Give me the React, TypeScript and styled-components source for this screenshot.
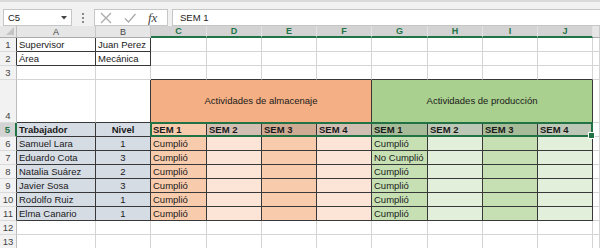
import React from "react"
import styled, { createGlobalStyle, css } from "styled-components"

const ORANGE_HEAD = "#f4b084"
const ORANGE_DARK = "#f8cbad"
const ORANGE_LIGHT = "#fce4d6"
const GREEN_HEAD = "#a9d08e"
const GREEN_DARK = "#c6e0b4"
const GREEN_LIGHT = "#e2efda"
const BLUE = "#d6dce4"
const EXCEL_GREEN = "#217346"
const GRID = "#d4d4d4"
const DARK = "#383838"

const GlobalStyle = createGlobalStyle`
    html, body {
        margin: 0;
        padding: 0;
        background: #fff;
        overflow: hidden;
    }
    body {
        font-family: "Liberation Sans", Arial, sans-serif;
        color: #1a1a1a;
    }
`

const Window = styled.div`
    width: 600px;
    height: 248px;
    overflow: hidden;
    display: flex;
    flex-direction: column;
`

const FormulaBar = styled.div`
    height: 33px;
    box-sizing: border-box;
    background: #f1f1f1;
    border-top: 2px solid #dadada;
    padding: 7px 0 0 3px;
    display: flex;
    align-items: flex-start;
`

const NameBox = styled.div`
    width: 69px;
    height: 17px;
    box-sizing: border-box;
    background: #fff;
    border: 1px solid #c6c6c6;
    display: flex;
    align-items: center;
    justify-content: space-between;
    padding: 0 4px 0 4px;
    font-size: 9.5px;
`

const Grip = styled.div`
    width: 22px;
    height: 17px;
    display: flex;
    align-items: center;
    justify-content: center;
`

const FxBox = styled.div`
    width: 74px;
    height: 17px;
    box-sizing: border-box;
    background: #fff;
    border: 1px solid #c6c6c6;
    display: flex;
    align-items: center;
    gap: 12px;
    padding-left: 5px;
`

const Fx = styled.span`
    font-family: "Liberation Serif", "Times New Roman", serif;
    font-style: italic;
    font-size: 13px;
    color: #444;
    line-height: 1;
`

const FormulaInput = styled.div`
    flex: 1;
    margin-left: 4px;
    height: 17px;
    box-sizing: border-box;
    background: #fff;
    border: 1px solid #c6c6c6;
    border-right: none;
    display: flex;
    align-items: center;
    padding-left: 7px;
    font-size: 9.5px;
`

const Sheet = styled.div`
    display: grid;
    grid-template-columns: 17px 79px 55px 56px 55px 55px 55px 56px 55px 55px 55px 1fr;
    grid-template-rows: 12px repeat(3, 14px) 43px repeat(9, 14px);
    font-size: 9.5px;
`

const Corner = styled.div`
    grid-row: 1;
    grid-column: 1;
    background: #e6e6e6;
    border-right: 1px solid #bdbdbd;
    border-bottom: 1px solid #ababab;
    display: flex;
    align-items: flex-end;
    justify-content: flex-end;
    padding: 0 2px 2px 0;
    box-sizing: border-box;
`

const ColHead = styled.div<{ $col: number; $active?: boolean }>`
    grid-row: 1;
    grid-column: ${p => p.$col};
    box-sizing: border-box;
    display: flex;
    align-items: center;
    justify-content: center;
    font-size: 9px;
    background: #e6e6e6;
    color: #444;
    border-right: 1px solid #c9c9c9;
    border-bottom: 1px solid #ababab;
    ${p => p.$active && css`
        background: #d3d3d3;
        color: ${EXCEL_GREEN};
        font-weight: bold;
        border-right-color: #e2e2e2;
        border-bottom: 2px solid ${EXCEL_GREEN};
    `}
`

const RowHead = styled.div<{ $row: number; $edge: string; $active?: boolean }>`
    grid-row: ${p => p.$row};
    grid-column: 1;
    box-sizing: border-box;
    display: flex;
    align-items: flex-end;
    justify-content: center;
    padding-bottom: 1px;
    background: #f2f2f2;
    color: #444;
    border-right: 1px solid ${p => p.$edge};
    border-bottom: 1px solid #dadada;
    ${p => p.$active && css`
        background: #d3d3d3;
        color: ${EXCEL_GREEN};
        font-weight: bold;
        border-right: 2px solid ${EXCEL_GREEN};
    `}
`

const Cell = styled.div<{
    $row: number
    $col: number
    $span: number
    $bg: string
    $right: string
    $bottom: string
    $align: "left" | "center"
    $bold?: boolean
    $middle?: boolean
    $sel?: boolean
}>`
    grid-row: ${p => p.$row};
    grid-column: ${p => p.$col} / span ${p => p.$span};
    box-sizing: border-box;
    display: flex;
    align-items: ${p => (p.$middle ? "center" : "flex-end")};
    justify-content: ${p => (p.$align === "center" ? "center" : "flex-start")};
    padding: 0 2px 1px 2px;
    white-space: nowrap;
    overflow: hidden;
    background-color: ${p => p.$bg};
    background-image: ${p => (p.$sel ? "linear-gradient(rgba(40,40,40,0.2), rgba(40,40,40,0.2))" : "none")};
    border-right: 1px solid ${p => p.$right};
    border-bottom: 1px solid ${p => p.$bottom};
    font-weight: ${p => (p.$bold ? "bold" : "normal")};
`

// C5:J5 selection frame, sits over the cells
const Selection = styled.div`
    grid-row: 6;
    grid-column: 4 / 12;
    margin: -1px 0 0 -1px;
    border: 2px solid ${EXCEL_GREEN};
    position: relative;
    pointer-events: none;
    z-index: 2;
`

const FillHandle = styled.div`
    position: absolute;
    right: -4px;
    bottom: -4px;
    width: 5px;
    height: 5px;
    background: ${EXCEL_GREEN};
    border: 1px solid #fff;
`

type CellSpec = {
    text?: string
    bg?: string
    bold?: boolean
    align?: "left" | "center"
    span?: number
    middle?: boolean
    sel?: boolean
}

const columns = ["A", "B", "C", "D", "E", "F", "G", "H", "I", "J", ""]
const fills = [BLUE, BLUE, ORANGE_DARK, ORANGE_LIGHT, ORANGE_DARK, ORANGE_LIGHT, GREEN_DARK, GREEN_LIGHT, GREEN_DARK, GREEN_LIGHT]

const workers: [string, string, string][] = [
    ["Samuel Lara", "1", "Cumplió"],
    ["Eduardo Cota", "3", "No Cumplió"],
    ["Natalia Suárez", "2", "Cumplió"],
    ["Javier Sosa", "3", "Cumplió"],
    ["Rodolfo Ruiz", "1", "Cumplió"],
    ["Elma Canario", "1", "Cumplió"],
]

const blankRow = (): CellSpec[] => columns.map(() => ({}))

const rows: CellSpec[][] = [
    [{ text: "Supervisor" }, { text: "Juan Perez" }, ...blankRow().slice(2)],
    [{ text: "Área" }, { text: "Mecánica" }, ...blankRow().slice(2)],
    blankRow(),
    [
        {}, {},
        { text: "Actividades de almacenaje", bg: ORANGE_HEAD, span: 4, align: "center", middle: true },
        { text: "Actividades de producción", bg: GREEN_HEAD, span: 4, align: "center", middle: true },
        {},
    ],
    [
        { text: "Trabajador", bg: BLUE, bold: true },
        { text: "Nivel", bg: BLUE, bold: true, align: "center" },
        ...["SEM 1", "SEM 2", "SEM 3", "SEM 4", "SEM 1", "SEM 2", "SEM 3", "SEM 4"].map((t, i) => ({
            text: t,
            bg: fills[i + 2],
            bold: true,
            sel: i > 0,
        })),
        {},
    ],
    ...workers.map(([name, level, prod]) => [
        { text: name, bg: BLUE },
        { text: level, bg: BLUE, align: "center" as const },
        { text: "Cumplió", bg: ORANGE_DARK },
        ...fills.slice(3, 6).map(bg => ({ bg })),
        { text: prod, bg: GREEN_DARK },
        ...fills.slice(7).map(bg => ({ bg })),
        {},
    ]),
    blankRow(),
    blankRow(),
]

// cells with a thin black border around them
const inBox = (r: number, c: number) =>
    (r >= 1 && r <= 2 && c <= 1) || (r === 4 && c >= 2 && c <= 9) || (r >= 5 && r <= 11 && c <= 9)

const XIcon = () => (
    <svg width="12" height="12" viewBox="0 0 12 12">
        <path d="M1 1 L11 11 M11 1 L1 11" stroke="#a8a8a8" strokeWidth="1.2" fill="none" />
    </svg>
)

const CheckIcon = () => (
    <svg width="12" height="12" viewBox="0 0 12 12">
        <path d="M1 6.5 L4.5 10 L11.5 2" stroke="#a8a8a8" strokeWidth="1.2" fill="none" />
    </svg>
)

export default function App() {
    return (
        <Window>
            <GlobalStyle />
            <FormulaBar>
                <NameBox>
                    <span>C5</span>
                    <svg width="6" height="4" viewBox="0 0 6 4">
                        <path d="M0 0 H6 L3 3.5 Z" fill="#444" />
                    </svg>
                </NameBox>
                <Grip>
                    <svg width="2" height="10" viewBox="0 0 2 10">
                        <rect x="0" y="0" width="2" height="2" fill="#8a8a8a" />
                        <rect x="0" y="4" width="2" height="2" fill="#8a8a8a" />
                        <rect x="0" y="8" width="2" height="2" fill="#8a8a8a" />
                    </svg>
                </Grip>
                <FxBox>
                    <XIcon />
                    <CheckIcon />
                    <Fx>fx</Fx>
                </FxBox>
                <FormulaInput>SEM 1</FormulaInput>
            </FormulaBar>
            <Sheet>
                <Corner>
                    <svg width="8" height="8" viewBox="0 0 8 8">
                        <path d="M8 0 V8 H0 Z" fill="#c4c4c4" />
                    </svg>
                </Corner>
                {columns.map((letter, i) => (
                    <ColHead key={i} $col={i + 2} $active={i >= 2 && i <= 9}>{letter}</ColHead>
                ))}
                {rows.map((cells, ri) => {
                    const r = ri + 1
                    let c = 0
                    return (
                        <React.Fragment key={r}>
                            <RowHead $row={r + 1} $active={r === 5} $edge={inBox(r, 0) ? DARK : "#bdbdbd"}>
                                {r}
                            </RowHead>
                            {cells.map((cell, ci) => {
                                const span = cell.span ?? 1
                                const start = c
                                const end = c + span - 1
                                c += span
                                let boxedBelow = false
                                for (let k = start; k <= end; k++) {
                                    if (inBox(r, k) || inBox(r + 1, k)) boxedBelow = true
                                }
                                const boxedRight = inBox(r, end) || inBox(r, end + 1)
                                return (
                                    <Cell
                                        key={ci}
                                        $row={r + 1}
                                        $col={start + 2}
                                        $span={span}
                                        $bg={cell.bg ?? "#fff"}
                                        $right={boxedRight ? DARK : GRID}
                                        $bottom={boxedBelow ? DARK : GRID}
                                        $align={cell.align ?? "left"}
                                        $bold={cell.bold}
                                        $middle={cell.middle}
                                        $sel={cell.sel}
                                    >
                                        {cell.text}
                                    </Cell>
                                )
                            })}
                        </React.Fragment>
                    )
                })}
                <Selection>
                    <FillHandle />
                </Selection>
            </Sheet>
        </Window>
    )
}
